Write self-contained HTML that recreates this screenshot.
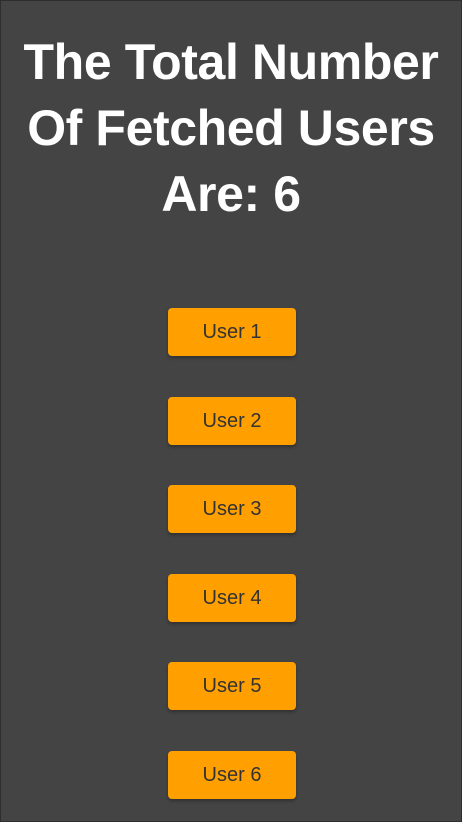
<!DOCTYPE html>
<html><head><style>
html,body{margin:0;padding:0}
body{width:460px;height:820px;background:#444;border:1px solid #2e2e2e;overflow:hidden;font-family:"Liberation Sans",sans-serif}
h1{margin:0;padding-top:28px;text-align:center;color:#fff;font-size:50px;line-height:66px;font-weight:bold;letter-spacing:-0.4px;white-space:nowrap}
.b{position:absolute;left:168px;width:128px;height:48px;background:#ffa000;border-radius:4px;color:#333;font-size:20px;line-height:48px;text-align:center;box-shadow:0 2px 3px rgba(0,0,0,.3)}
</style></head><body>
<h1>The Total Number<br>Of Fetched Users<br>Are: 6</h1>
<div class="b" style="top:308px">User 1</div>
<div class="b" style="top:397px">User 2</div>
<div class="b" style="top:485px">User 3</div>
<div class="b" style="top:574px">User 4</div>
<div class="b" style="top:662px">User 5</div>
<div class="b" style="top:751px">User 6</div>
</body></html>
